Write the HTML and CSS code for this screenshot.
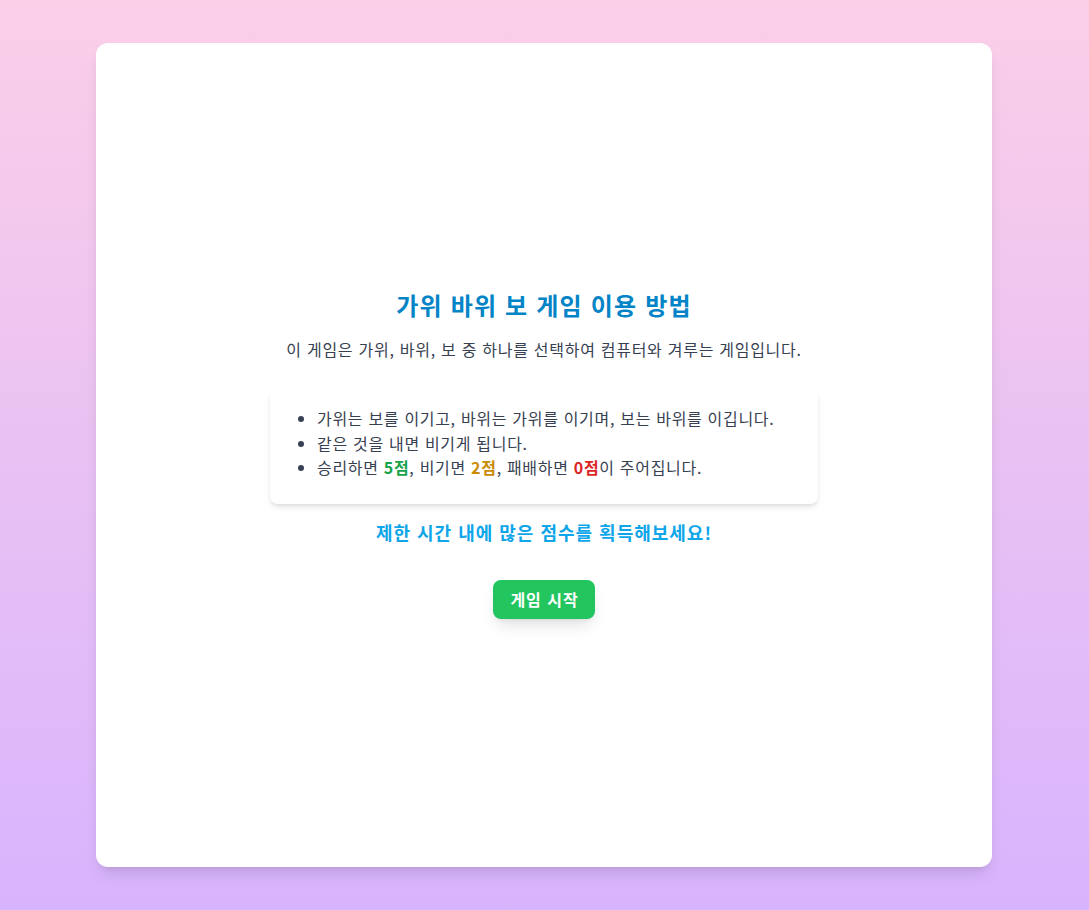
FILE: index.html
```html
<!DOCTYPE html>
<html lang="ko">
<head>
<meta charset="utf-8">
<title>가위 바위 보 게임</title>
<link rel="stylesheet" href="styles.css">
</head>
<body>
<main class="card">
  <section class="intro">
    <h1 class="title">가위 바위 보 게임 이용 방법</h1>
    <p class="lead">이 게임은 가위, 바위, 보 중 하나를 선택하여 컴퓨터와 겨루는 게임입니다.</p>
    <div class="rules">
      <ul class="rule-list">
        <li>가위는 보를 이기고, 바위는 가위를 이기며, 보는 바위를 이깁니다.</li>
        <li>같은 것을 내면 비기게 됩니다.</li>
        <li>승리하면 <b class="win">5점</b>, 비기면 <b class="draw">2점</b>, 패배하면 <b class="lose">0점</b>이 주어집니다.</li>
      </ul>
    </div>
    <p class="cta">제한 시간 내에 많은 점수를 획득해보세요!</p>
    <button class="start" type="button">게임 시작</button>
  </section>
</main>
</body>
</html>
```

FILE: styles.css
```css
* { box-sizing: border-box; }
html, body { height: 100%; }
body {
  margin: 0;
  min-height: 100vh;
  background: linear-gradient(to bottom, #fbcfe8, #d8b4fe);
  font-family: "Noto Sans CJK KR", "Noto Sans", sans-serif;
  color: #374151;
  display: flex;
  align-items: center;
  justify-content: center;
  padding-right: 1px;
}
.card {
  width: 896px;
  height: 824px;
  background: #ffffff;
  border-radius: 12px;
  box-shadow: 0 10px 15px -3px rgba(0,0,0,0.1), 0 4px 6px -4px rgba(0,0,0,0.1);
  display: flex;
  align-items: center;
  justify-content: center;
}
.intro {
  display: flex;
  flex-direction: column;
  align-items: center;
  text-align: center;
}
.title {
  margin: 0 0 18px;
  font-size: 24px;
  line-height: 28px;
  font-weight: 700;
  color: #0284c7;
  letter-spacing: 0.05em;
}
.lead {
  margin: 0 0 28px;
  font-size: 16px;
  line-height: 24px;
  color: #374151;
  letter-spacing: 0.045em;
}
.rules {
  width: 548px;
  background: #ffffff;
  border-radius: 8px;
  box-shadow: 0 4px 6px -1px rgba(0,0,0,0.1), 0 2px 4px -2px rgba(0,0,0,0.1);
  padding: 17px 16px 24px;
  text-align: left;
}
.rule-list {
  margin: 0;
  padding-left: 31px;
  list-style: disc;
}
.rule-list li {
  font-size: 16px;
  line-height: 24.5px;
  color: #374151;
  letter-spacing: 0.043em;
}
.rule-list li::marker { color: #374151; }
.win { color: #16a34a; }
.draw { color: #ca8a04; }
.lose { color: #dc2626; }
.cta {
  margin: 14px 0 34px;
  font-size: 18px;
  line-height: 28px;
  font-weight: 700;
  color: #0ea5e9;
  letter-spacing: 0.055em;
}
.start {
  font-family: inherit;
  font-size: 16px;
  line-height: 24px;
  font-weight: 700;
  color: #ffffff;
  background: #22c55e;
  border: none;
  border-radius: 8px;
  padding: 7px 16px 8px 17px;
  letter-spacing: 0.06em;
  box-shadow: 0 10px 15px -3px rgba(0,0,0,0.1), 0 4px 6px -4px rgba(0,0,0,0.1);
  cursor: pointer;
}
```
